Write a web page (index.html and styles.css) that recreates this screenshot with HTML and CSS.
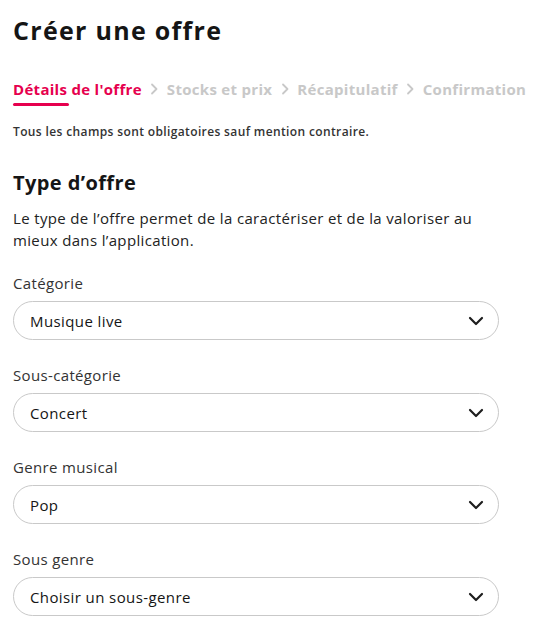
FILE: index.html
```html
<!DOCTYPE html>
<html lang="fr">
<head>
<meta charset="utf-8">
<title>Créer une offre</title>
<link rel="stylesheet" href="styles.css">
</head>
<body>
<div class="page">
  <h1 class="title">Créer une offre</h1>
  <nav class="steps">
    <span class="step active">Détails de l'offre</span>
    <svg class="sep" viewBox="0 0 10 14" width="10" height="14"><path d="M3 2.5 L7.5 7 L3 11.5" fill="none" stroke="#c8c8c8" stroke-width="1.8" stroke-linecap="round" stroke-linejoin="round"/></svg>
    <span class="step">Stocks et prix</span>
    <svg class="sep" viewBox="0 0 10 14" width="10" height="14"><path d="M3 2.5 L7.5 7 L3 11.5" fill="none" stroke="#c8c8c8" stroke-width="1.8" stroke-linecap="round" stroke-linejoin="round"/></svg>
    <span class="step">Récapitulatif</span>
    <svg class="sep" viewBox="0 0 10 14" width="10" height="14"><path d="M3 2.5 L7.5 7 L3 11.5" fill="none" stroke="#c8c8c8" stroke-width="1.8" stroke-linecap="round" stroke-linejoin="round"/></svg>
    <span class="step">Confirmation</span>
  </nav>
  <p class="mandatory">Tous les champs sont obligatoires sauf mention contraire.</p>
  <h2 class="section-title">Type d’offre</h2>
  <p class="desc">Le type de l’offre permet de la caractériser et de la valoriser au mieux dans l’application.</p>

  <div class="field">
    <label class="label">Catégorie</label>
    <div class="select"><span>Musique live</span><svg class="chev" viewBox="0 0 16 10" width="16" height="10"><path d="M2 2 L8 8 L14 2" fill="none" stroke="#1e1e1e" stroke-width="2.2" stroke-linecap="round" stroke-linejoin="round"/></svg></div>
  </div>
  <div class="field">
    <label class="label">Sous-catégorie</label>
    <div class="select"><span>Concert</span><svg class="chev" viewBox="0 0 16 10" width="16" height="10"><path d="M2 2 L8 8 L14 2" fill="none" stroke="#1e1e1e" stroke-width="2.2" stroke-linecap="round" stroke-linejoin="round"/></svg></div>
  </div>
  <div class="field">
    <label class="label">Genre musical</label>
    <div class="select"><span>Pop</span><svg class="chev" viewBox="0 0 16 10" width="16" height="10"><path d="M2 2 L8 8 L14 2" fill="none" stroke="#1e1e1e" stroke-width="2.2" stroke-linecap="round" stroke-linejoin="round"/></svg></div>
  </div>
  <div class="field">
    <label class="label">Sous genre</label>
    <div class="select"><span>Choisir un sous-genre</span><svg class="chev" viewBox="0 0 16 10" width="16" height="10"><path d="M2 2 L8 8 L14 2" fill="none" stroke="#1e1e1e" stroke-width="2.2" stroke-linecap="round" stroke-linejoin="round"/></svg></div>
  </div>
</div>
</body>
</html>
```
FILE: styles.css
```css
html, body {
  margin: 0;
  padding: 0;
  background: #fff;
}
body {
  font-family: "Open Sans", "Liberation Sans", sans-serif;
  color: #151515;
}
.page {
  padding: 13px 40px 0 13px;
}
.title {
  margin: 0;
  font-size: 25px;
  line-height: 34px;
  font-weight: 700;
  letter-spacing: 1.3px;
  color: #151515;
}
.steps {
  display: flex;
  align-items: flex-start;
  gap: 7.5px;
  margin-top: 32px;
  height: 34px;
}
.step {
  font-size: 15px;
  font-weight: 700;
  color: #c8c8c8;
  line-height: 20px;
  letter-spacing: 0.3px;
  white-space: nowrap;
}
.step.active {
  color: #e6004e;
  position: relative;
}
.step.active::after {
  content: "";
  position: absolute;
  left: 0;
  top: 24px;
  width: 56px;
  height: 3px;
  border-radius: 2px;
  background: #e6004e;
}
.sep {
  margin-top: 3px;
  flex: none;
}
.mandatory {
  margin: 11px 0 0;
  font-size: 12px;
  line-height: 16px;
  font-weight: 600;
  letter-spacing: 0.37px;
  color: #333;
}
.section-title {
  margin: 29px 0 0;
  font-size: 20px;
  line-height: 28px;
  font-weight: 700;
  letter-spacing: 0.4px;
  color: #151515;
}
.desc {
  margin: 10px 0 0;
  font-size: 15px;
  line-height: 22px;
  letter-spacing: 0.35px;
  color: #222;
}
.field {
  display: flex;
  flex-direction: column;
  margin-top: 22px;
}
.field + .field {
  margin-top: 25px;
}
.label {
  font-size: 15px;
  line-height: 20px;
  letter-spacing: 0.35px;
  color: #333;
}
.select {
  margin-top: 8px;
  height: 39px;
  box-sizing: border-box;
  border: 1px solid #c9c9c9;
  border-radius: 20px;
  display: flex;
  align-items: center;
  justify-content: space-between;
  padding: 0 14px 0 16px;
  font-size: 15px;
  letter-spacing: 0.4px;
  color: #151515;
}
.chev {
  flex: none;
}
```
